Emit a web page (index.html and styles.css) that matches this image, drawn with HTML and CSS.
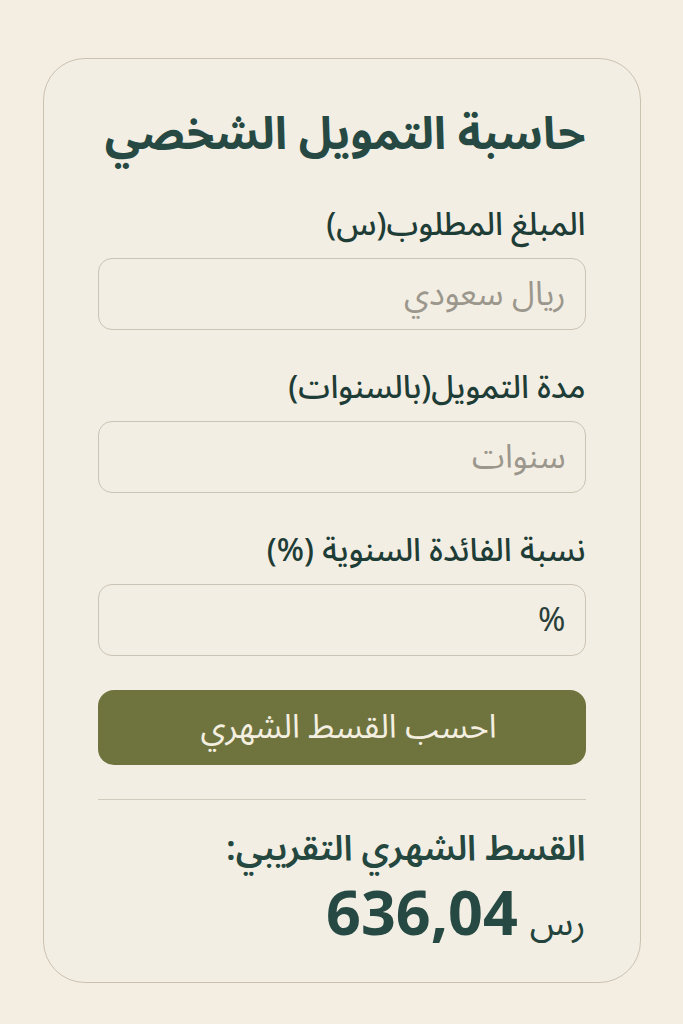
FILE: index.html
```html
<!DOCTYPE html>
<html lang="ar" dir="rtl">
<head>
    <meta charset="UTF-8" />
    <title>حاسبة التمويل الشخصي</title>
    <link rel="stylesheet" href="styles.css">
</head>
<body>
    <main class="card">
        <h1 class="title">حاسبة التمويل الشخصي</h1>

        <!-- amount -->
        <div class="field">
            <label class="label" for="amount">المبلغ المطلوب(س)</label>
            <input class="input" type="text" id="amount" placeholder="ريال سعودي">
        </div>

        <!-- years -->
        <div class="field">
            <label class="label" for="years">مدة التمويل(بالسنوات)</label>
            <input class="input" type="text" id="years" placeholder="سنوات">
        </div>

        <!-- rate -->
        <div class="field">
            <label class="label" for="rate">نسبة الفائدة السنوية (%)</label>
            <input class="input input-dark" type="text" id="rate" placeholder="%">
        </div>

        <button class="calc-btn">احسب القسط الشهري</button>

        <hr class="divider">

        <!-- result -->
        <section class="result">
            <p class="result-label">القسط الشهري التقريبي:</p>
            <p class="result-value"><span class="currency">رس</span><span class="amount">636,04</span></p>
        </section>
    </main>
</body>
</html>
```

FILE: styles.css
```css
body {
  margin: 0;
  background-color: #f3ede2;
  font-family: "Noto Sans Arabic", "Noto Sans", "DejaVu Sans", sans-serif;
  color: #22443d;
}

.card {
  box-sizing: border-box;
  width: 598px;
  height: 925px;
  margin: 58px auto 0;
  padding: 49px 54px 0;
  border: 1.5px solid #cbc1b0;
  border-radius: 42px;
  background-color: #f3eee3;
}

.title {
  margin: 0 0 43px;
  font-size: 45px;
  line-height: 54px;
  font-weight: 700;
  color: #264a43;
}

.field {
  display: flex;
  flex-direction: column;
}

.field + .field {
  margin-top: 38px;
}

.label {
  font-size: 32px;
  line-height: 40px;
  font-weight: 500;
  color: #1f3d37;
  margin-bottom: 13px;
}

.input {
  box-sizing: border-box;
  width: 100%;
  height: 72px;
  padding: 0 19px;
  border: 1.5px solid #cbc3b4;
  border-radius: 14px;
  background-color: #f3eee3;
  font-family: inherit;
  font-size: 33px;
  color: #22443d;
  outline: none;
}

.input::placeholder {
  color: #9b978d;
}

.input-dark::placeholder {
  color: #2b3f3a;
}

.calc-btn {
  display: block;
  width: 100%;
  height: 75px;
  margin-top: 34px;
  border: none;
  border-radius: 16px;
  background-color: #6f743e;
  color: #f4efe0;
  font-family: inherit;
  font-size: 33px;
  padding: 0 0 0 14px;
  cursor: pointer;
}

.divider {
  border: none;
  border-top: 1.5px solid #d3cbbc;
  margin: 34px 0 0;
}

.result {
  padding-top: 27px;
}

.result-label {
  margin: 0;
  font-size: 35px;
  line-height: 44px;
  font-weight: 600;
  color: #244740;
}

.result-value {
  display: flex;
  align-items: baseline;
  gap: 12px;
  margin: 3px 0 0;
  line-height: 84px;
}

.currency {
  font-size: 36px;
  color: #22443d;
}

.amount {
  font-size: 61px;
  font-weight: 700;
  color: #264a43;
  direction: ltr;
}
```
